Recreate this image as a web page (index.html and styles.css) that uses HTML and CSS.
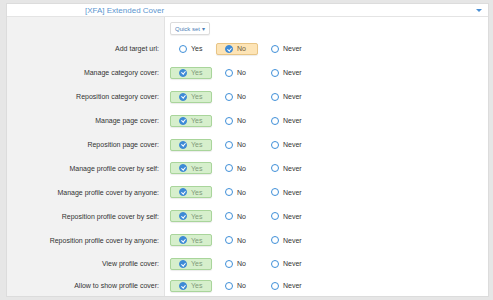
FILE: index.html
```html
<!DOCTYPE html>
<html lang="en">
<head>
    <meta charset="UTF-8">
    <title>[XFA] Extended Cover</title>
    <link rel="stylesheet" href="styles.css">
</head>
<body>
    <div class="panel">
        <div class="panel-head">
            <span class="panel-title">[XFA] Extended Cover</span>
            <span class="panel-arrow"></span>
        </div>

        <div class="form">
            <div class="row row-quick">
                <div class="label"></div>
                <div class="controls">
                    <button class="quick-set">Quick set <span class="caret">&#9662;</span></button>
                </div>
            </div>

            <div class="row">
                <div class="label">Add target url:</div>
                <div class="controls">
                    <span class="opt"><i class="radio"></i>Yes</span>
                    <span class="opt opt-no"><i class="radio checked"></i>No</span>
                    <span class="opt"><i class="radio"></i>Never</span>
                </div>
            </div>

            <div class="row">
                <div class="label">Manage category cover:</div>
                <div class="controls">
                    <span class="opt opt-yes"><i class="radio checked"></i>Yes</span>
                    <span class="opt"><i class="radio"></i>No</span>
                    <span class="opt"><i class="radio"></i>Never</span>
                </div>
            </div>

            <div class="row">
                <div class="label">Reposition category cover:</div>
                <div class="controls">
                    <span class="opt opt-yes"><i class="radio checked"></i>Yes</span>
                    <span class="opt"><i class="radio"></i>No</span>
                    <span class="opt"><i class="radio"></i>Never</span>
                </div>
            </div>

            <div class="row">
                <div class="label">Manage page cover:</div>
                <div class="controls">
                    <span class="opt opt-yes"><i class="radio checked"></i>Yes</span>
                    <span class="opt"><i class="radio"></i>No</span>
                    <span class="opt"><i class="radio"></i>Never</span>
                </div>
            </div>

            <div class="row">
                <div class="label">Reposition page cover:</div>
                <div class="controls">
                    <span class="opt opt-yes"><i class="radio checked"></i>Yes</span>
                    <span class="opt"><i class="radio"></i>No</span>
                    <span class="opt"><i class="radio"></i>Never</span>
                </div>
            </div>

            <div class="row">
                <div class="label">Manage profile cover by self:</div>
                <div class="controls">
                    <span class="opt opt-yes"><i class="radio checked"></i>Yes</span>
                    <span class="opt"><i class="radio"></i>No</span>
                    <span class="opt"><i class="radio"></i>Never</span>
                </div>
            </div>

            <div class="row">
                <div class="label">Manage profile cover by anyone:</div>
                <div class="controls">
                    <span class="opt opt-yes"><i class="radio checked"></i>Yes</span>
                    <span class="opt"><i class="radio"></i>No</span>
                    <span class="opt"><i class="radio"></i>Never</span>
                </div>
            </div>

            <div class="row">
                <div class="label">Reposition profile cover by self:</div>
                <div class="controls">
                    <span class="opt opt-yes"><i class="radio checked"></i>Yes</span>
                    <span class="opt"><i class="radio"></i>No</span>
                    <span class="opt"><i class="radio"></i>Never</span>
                </div>
            </div>

            <div class="row">
                <div class="label">Reposition profile cover by anyone:</div>
                <div class="controls">
                    <span class="opt opt-yes"><i class="radio checked"></i>Yes</span>
                    <span class="opt"><i class="radio"></i>No</span>
                    <span class="opt"><i class="radio"></i>Never</span>
                </div>
            </div>

            <div class="row">
                <div class="label">View profile cover:</div>
                <div class="controls">
                    <span class="opt opt-yes"><i class="radio checked"></i>Yes</span>
                    <span class="opt"><i class="radio"></i>No</span>
                    <span class="opt"><i class="radio"></i>Never</span>
                </div>
            </div>

            <div class="row row-last">
                <div class="label">Allow to show profile cover:</div>
                <div class="controls">
                    <span class="opt opt-yes"><i class="radio checked"></i>Yes</span>
                    <span class="opt"><i class="radio"></i>No</span>
                    <span class="opt"><i class="radio"></i>Never</span>
                </div>
            </div>
        </div>
    </div>
</body>
</html>
```

FILE: styles.css
```css
/* General Styles */
body {
    margin: 0;
    padding: 3px 4px 0 6px;
    background-color: #e6e6e6;
    font-family: "Liberation Sans", Arial, sans-serif;
    font-size: 7px;
    color: #333;
}

.panel {
    background-color: #fff;
    border: 1px solid #dcdcdc;
}

.panel-head {
    display: flex;
    align-items: center;
    height: 12px;
    padding: 0 6px 0 78px;
    border-bottom: 1px solid #e4e4e4;
}

.panel-title {
    flex: 1;
    font-size: 8px;
    color: #5b96cf;
}

.panel-arrow {
    width: 0;
    height: 0;
    border-left: 3px solid transparent;
    border-right: 3px solid transparent;
    border-top: 3px solid #4a8fd4;
}

/* Form rows */
.row {
    display: grid;
    grid-template-columns: 158px 1fr;
    height: 23.9px;
}

.row-quick {
    height: 20px;
}

.row-last {
    height: 20px;
}

.label {
    display: flex;
    align-items: center;
    justify-content: flex-end;
    padding-right: 5px;
    background-color: #f2f2f2;
    border-right: 1px solid #e2e2e2;
}

.controls {
    display: flex;
    align-items: center;
    gap: 4px;
    padding-left: 5px;
}

.row-quick .controls {
    align-items: flex-start;
    padding-top: 5px;
}

.quick-set {
    height: 13px;
    padding: 0 4px;
    font-family: inherit;
    font-size: 6px;
    color: #4c7fb8;
    background-color: #fff;
    border: 1px solid #dcdcdc;
    border-radius: 2px;
    box-shadow: 0 1px 1px rgba(0, 0, 0, 0.06);
}

.caret {
    font-size: 6px;
}

/* Radio options */
.opt {
    display: flex;
    align-items: center;
    box-sizing: border-box;
    width: 42px;
    height: 12px;
    padding-left: 8px;
    border: 1px solid transparent;
    border-radius: 2px;
}

.opt-yes {
    background-color: #d6efcc;
    border-color: #a9d59b;
    color: #7f9a7a;
    box-shadow: 0 1px 1px rgba(0, 0, 0, 0.08);
}

.opt-no {
    background-color: #fde4b6;
    border-color: #e8c586;
    color: #6b5a3a;
    box-shadow: 0 1px 1px rgba(0, 0, 0, 0.08);
}

.radio {
    position: relative;
    box-sizing: border-box;
    width: 8px;
    height: 8px;
    margin-right: 4px;
    border: 1.2px solid #3f8fd8;
    border-radius: 50%;
    background-color: #fff;
}

.radio.checked {
    background-color: #3d8ad6;
    border-color: #3d8ad6;
}

.radio.checked::after {
    content: '';
    position: absolute;
    left: 1.6px;
    top: 0.6px;
    width: 1.6px;
    height: 3px;
    border-right: 1.2px solid #fff;
    border-bottom: 1.2px solid #fff;
    transform: rotate(40deg);
}
```
